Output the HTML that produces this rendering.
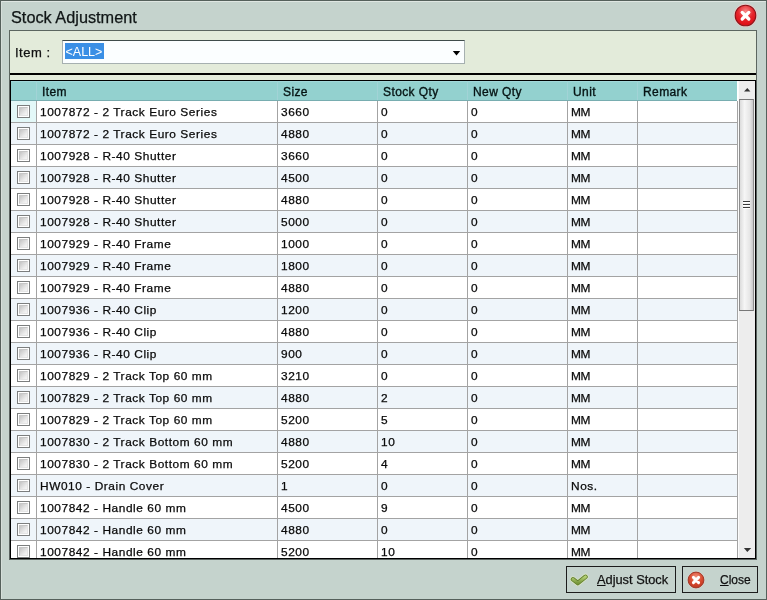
<!DOCTYPE html><html><head><meta charset="utf-8"><style>
*{margin:0;padding:0;box-sizing:border-box}
html,body{width:767px;height:600px;overflow:hidden}
body{background:#c5d3cd;position:relative;font-family:"Liberation Sans",sans-serif;color:#111}
.a{position:absolute}
.t{position:absolute;white-space:nowrap;line-height:14px;height:14px}
.bt{font-size:11px;letter-spacing:0.52px;transform:scaleX(1.08);transform-origin:0 0;color:#0a0a0a;-webkit-text-stroke:0.25px #0a0a0a}
.mm{letter-spacing:-0.4px}
.ht{font-size:12px;letter-spacing:0.4px;color:#061414;-webkit-text-stroke:0.35px #061414}

.cb{width:13px;height:13px;border:1px solid #7c7e7e;background:#fff}.cb:after{content:"";position:absolute;left:1px;top:1px;width:9px;height:9px;box-sizing:border-box;border:1px solid #c6c6c6;border-right-color:#e4e4e4;border-bottom-color:#e4e4e4;background:linear-gradient(135deg,#c4c4c4,#ececec 70%,#f6f6f6)}
</style></head><body>
<div class="a" style="left:0;top:0;width:767px;height:600px;background:#c5d3cd;will-change:transform">
<div class="a" style="left:0;top:0;width:767px;height:600px;border:1px solid #55605b"></div>
<div class="a" style="left:1px;top:1px;width:765px;height:598px;border-top:1px solid #dfe6e2;border-left:1px solid #d6dfda"></div>
<div class="t" style="left:11px;top:7px;font-size:16.3px;line-height:20px;height:20px;color:#101616;-webkit-text-stroke:0.25px #101616">Stock Adjustment</div>
<svg class="a" style="left:733px;top:3px" width="26" height="26" viewBox="0 0 26 26">
<defs><radialGradient id="rg1" cx="0.5" cy="0.3" r="0.75"><stop offset="0" stop-color="#f88888"/><stop offset="0.5" stop-color="#e5262c"/><stop offset="0.85" stop-color="#e01018"/><stop offset="1" stop-color="#b01015"/></radialGradient></defs>
<circle cx="12.5" cy="12.5" r="11.7" fill="#f2caca" opacity="0.75"/>
<circle cx="12.5" cy="12.5" r="10.3" fill="url(#rg1)" stroke="#8a1418" stroke-width="1.1"/>
<path d="M9.2 9.4 L15.8 16 M15.8 9.4 L9.2 16" stroke="#fff" stroke-width="3.3" stroke-linecap="round"/>
</svg>
<div class="a" style="left:9px;top:30px;width:748px;height:92px;background:#e3ebda;border:1px solid #5c6660;border-bottom:none"></div>
<div class="t" style="left:15px;top:46px;font-size:13px;letter-spacing:0.5px;color:#111;-webkit-text-stroke:0.25px #111">Item :</div>
<div class="a" style="left:62px;top:40px;width:403px;height:24px;background:#fbfeff;border:1px solid #a6b0b0;border-top-color:#3f4c4b"></div>
<div class="a" style="left:65px;top:43px;width:39px;height:16px;background:#3a8fe5"></div>
<div class="t" style="left:65.5px;top:45px;font-size:12.5px;color:#fff">&lt;ALL&gt;</div>
<svg class="a" style="left:452px;top:51px" width="10" height="7"><path d="M0.8 0 L8.2 0 L4.5 4.6 Z" fill="#000"/></svg>
<div class="a" style="left:10px;top:73px;width:746px;height:2px;background:#000"></div>
<div class="a" style="left:9px;top:80px;width:748px;height:480px;border:1px solid #5a6360;border-top:none"></div>
<div class="a" style="left:10px;top:80px;width:746px;height:479px;background:#fff;border:1px solid #000;overflow:hidden">
<div class="a" style="left:0;top:0;width:726px;height:19px;background:#93d1cf"></div>
<div class="a" style="left:0;top:0;width:726px;height:1px;background:#a2d8da"></div>
<div class="a" style="left:0;top:19px;width:726px;height:1px;background:#78adb0"></div>
<div class="t ht" style="left:31px;top:4px">Item</div>
<div class="t ht" style="left:272px;top:4px">Size</div>
<div class="t ht" style="left:372px;top:4px">Stock Qty</div>
<div class="t ht" style="left:462px;top:4px">New Qty</div>
<div class="t ht" style="left:562px;top:4px">Unit</div>
<div class="t ht" style="left:632px;top:4px">Remark</div>
<div class="a" style="left:25px;top:0;width:1px;height:19px;background:#a2d3d6"></div>
<div class="a" style="left:266px;top:0;width:1px;height:19px;background:#a2d3d6"></div>
<div class="a" style="left:366px;top:0;width:1px;height:19px;background:#a2d3d6"></div>
<div class="a" style="left:456px;top:0;width:1px;height:19px;background:#a2d3d6"></div>
<div class="a" style="left:556px;top:0;width:1px;height:19px;background:#a2d3d6"></div>
<div class="a" style="left:626px;top:0;width:1px;height:19px;background:#a2d3d6"></div>
<div class="a" style="left:0;top:20px;width:726px;height:21px;background:#ffffff"></div>
<div class="a" style="left:0;top:20px;width:25px;height:21px;background:#e3f8f8"></div>
<div class="a" style="left:0;top:41px;width:726px;height:1px;background:#a3a3a3"></div>
<div class="a cb" style="left:6px;top:24px"></div>
<div class="t bt" style="left:29px;top:24px">1007872 - 2 Track Euro Series</div>
<div class="t bt" style="left:270px;top:24px">3660</div>
<div class="t bt" style="left:370px;top:24px">0</div>
<div class="t bt" style="left:460px;top:24px">0</div>
<div class="t bt" style="left:560px;top:24px"><span class="mm">MM</span></div>
<div class="a" style="left:0;top:42px;width:726px;height:21px;background:#eff5fa"></div>
<div class="a" style="left:0;top:63px;width:726px;height:1px;background:#a3a3a3"></div>
<div class="a cb" style="left:6px;top:46px"></div>
<div class="t bt" style="left:29px;top:46px">1007872 - 2 Track Euro Series</div>
<div class="t bt" style="left:270px;top:46px">4880</div>
<div class="t bt" style="left:370px;top:46px">0</div>
<div class="t bt" style="left:460px;top:46px">0</div>
<div class="t bt" style="left:560px;top:46px"><span class="mm">MM</span></div>
<div class="a" style="left:0;top:64px;width:726px;height:21px;background:#ffffff"></div>
<div class="a" style="left:0;top:85px;width:726px;height:1px;background:#a3a3a3"></div>
<div class="a cb" style="left:6px;top:68px"></div>
<div class="t bt" style="left:29px;top:68px">1007928 - R-40 Shutter</div>
<div class="t bt" style="left:270px;top:68px">3660</div>
<div class="t bt" style="left:370px;top:68px">0</div>
<div class="t bt" style="left:460px;top:68px">0</div>
<div class="t bt" style="left:560px;top:68px"><span class="mm">MM</span></div>
<div class="a" style="left:0;top:86px;width:726px;height:21px;background:#eff5fa"></div>
<div class="a" style="left:0;top:107px;width:726px;height:1px;background:#a3a3a3"></div>
<div class="a cb" style="left:6px;top:90px"></div>
<div class="t bt" style="left:29px;top:90px">1007928 - R-40 Shutter</div>
<div class="t bt" style="left:270px;top:90px">4500</div>
<div class="t bt" style="left:370px;top:90px">0</div>
<div class="t bt" style="left:460px;top:90px">0</div>
<div class="t bt" style="left:560px;top:90px"><span class="mm">MM</span></div>
<div class="a" style="left:0;top:108px;width:726px;height:21px;background:#ffffff"></div>
<div class="a" style="left:0;top:129px;width:726px;height:1px;background:#a3a3a3"></div>
<div class="a cb" style="left:6px;top:112px"></div>
<div class="t bt" style="left:29px;top:112px">1007928 - R-40 Shutter</div>
<div class="t bt" style="left:270px;top:112px">4880</div>
<div class="t bt" style="left:370px;top:112px">0</div>
<div class="t bt" style="left:460px;top:112px">0</div>
<div class="t bt" style="left:560px;top:112px"><span class="mm">MM</span></div>
<div class="a" style="left:0;top:130px;width:726px;height:21px;background:#eff5fa"></div>
<div class="a" style="left:0;top:151px;width:726px;height:1px;background:#a3a3a3"></div>
<div class="a cb" style="left:6px;top:134px"></div>
<div class="t bt" style="left:29px;top:134px">1007928 - R-40 Shutter</div>
<div class="t bt" style="left:270px;top:134px">5000</div>
<div class="t bt" style="left:370px;top:134px">0</div>
<div class="t bt" style="left:460px;top:134px">0</div>
<div class="t bt" style="left:560px;top:134px"><span class="mm">MM</span></div>
<div class="a" style="left:0;top:152px;width:726px;height:21px;background:#ffffff"></div>
<div class="a" style="left:0;top:173px;width:726px;height:1px;background:#a3a3a3"></div>
<div class="a cb" style="left:6px;top:156px"></div>
<div class="t bt" style="left:29px;top:156px">1007929 - R-40 Frame</div>
<div class="t bt" style="left:270px;top:156px">1000</div>
<div class="t bt" style="left:370px;top:156px">0</div>
<div class="t bt" style="left:460px;top:156px">0</div>
<div class="t bt" style="left:560px;top:156px"><span class="mm">MM</span></div>
<div class="a" style="left:0;top:174px;width:726px;height:21px;background:#eff5fa"></div>
<div class="a" style="left:0;top:195px;width:726px;height:1px;background:#a3a3a3"></div>
<div class="a cb" style="left:6px;top:178px"></div>
<div class="t bt" style="left:29px;top:178px">1007929 - R-40 Frame</div>
<div class="t bt" style="left:270px;top:178px">1800</div>
<div class="t bt" style="left:370px;top:178px">0</div>
<div class="t bt" style="left:460px;top:178px">0</div>
<div class="t bt" style="left:560px;top:178px"><span class="mm">MM</span></div>
<div class="a" style="left:0;top:196px;width:726px;height:21px;background:#ffffff"></div>
<div class="a" style="left:0;top:217px;width:726px;height:1px;background:#a3a3a3"></div>
<div class="a cb" style="left:6px;top:200px"></div>
<div class="t bt" style="left:29px;top:200px">1007929 - R-40 Frame</div>
<div class="t bt" style="left:270px;top:200px">4880</div>
<div class="t bt" style="left:370px;top:200px">0</div>
<div class="t bt" style="left:460px;top:200px">0</div>
<div class="t bt" style="left:560px;top:200px"><span class="mm">MM</span></div>
<div class="a" style="left:0;top:218px;width:726px;height:21px;background:#eff5fa"></div>
<div class="a" style="left:0;top:239px;width:726px;height:1px;background:#a3a3a3"></div>
<div class="a cb" style="left:6px;top:222px"></div>
<div class="t bt" style="left:29px;top:222px">1007936 - R-40 Clip</div>
<div class="t bt" style="left:270px;top:222px">1200</div>
<div class="t bt" style="left:370px;top:222px">0</div>
<div class="t bt" style="left:460px;top:222px">0</div>
<div class="t bt" style="left:560px;top:222px"><span class="mm">MM</span></div>
<div class="a" style="left:0;top:240px;width:726px;height:21px;background:#ffffff"></div>
<div class="a" style="left:0;top:261px;width:726px;height:1px;background:#a3a3a3"></div>
<div class="a cb" style="left:6px;top:244px"></div>
<div class="t bt" style="left:29px;top:244px">1007936 - R-40 Clip</div>
<div class="t bt" style="left:270px;top:244px">4880</div>
<div class="t bt" style="left:370px;top:244px">0</div>
<div class="t bt" style="left:460px;top:244px">0</div>
<div class="t bt" style="left:560px;top:244px"><span class="mm">MM</span></div>
<div class="a" style="left:0;top:262px;width:726px;height:21px;background:#eff5fa"></div>
<div class="a" style="left:0;top:283px;width:726px;height:1px;background:#a3a3a3"></div>
<div class="a cb" style="left:6px;top:266px"></div>
<div class="t bt" style="left:29px;top:266px">1007936 - R-40 Clip</div>
<div class="t bt" style="left:270px;top:266px">900</div>
<div class="t bt" style="left:370px;top:266px">0</div>
<div class="t bt" style="left:460px;top:266px">0</div>
<div class="t bt" style="left:560px;top:266px"><span class="mm">MM</span></div>
<div class="a" style="left:0;top:284px;width:726px;height:21px;background:#ffffff"></div>
<div class="a" style="left:0;top:305px;width:726px;height:1px;background:#a3a3a3"></div>
<div class="a cb" style="left:6px;top:288px"></div>
<div class="t bt" style="left:29px;top:288px">1007829 - 2 Track Top 60 mm</div>
<div class="t bt" style="left:270px;top:288px">3210</div>
<div class="t bt" style="left:370px;top:288px">0</div>
<div class="t bt" style="left:460px;top:288px">0</div>
<div class="t bt" style="left:560px;top:288px"><span class="mm">MM</span></div>
<div class="a" style="left:0;top:306px;width:726px;height:21px;background:#eff5fa"></div>
<div class="a" style="left:0;top:327px;width:726px;height:1px;background:#a3a3a3"></div>
<div class="a cb" style="left:6px;top:310px"></div>
<div class="t bt" style="left:29px;top:310px">1007829 - 2 Track Top 60 mm</div>
<div class="t bt" style="left:270px;top:310px">4880</div>
<div class="t bt" style="left:370px;top:310px">2</div>
<div class="t bt" style="left:460px;top:310px">0</div>
<div class="t bt" style="left:560px;top:310px"><span class="mm">MM</span></div>
<div class="a" style="left:0;top:328px;width:726px;height:21px;background:#ffffff"></div>
<div class="a" style="left:0;top:349px;width:726px;height:1px;background:#a3a3a3"></div>
<div class="a cb" style="left:6px;top:332px"></div>
<div class="t bt" style="left:29px;top:332px">1007829 - 2 Track Top 60 mm</div>
<div class="t bt" style="left:270px;top:332px">5200</div>
<div class="t bt" style="left:370px;top:332px">5</div>
<div class="t bt" style="left:460px;top:332px">0</div>
<div class="t bt" style="left:560px;top:332px"><span class="mm">MM</span></div>
<div class="a" style="left:0;top:350px;width:726px;height:21px;background:#eff5fa"></div>
<div class="a" style="left:0;top:371px;width:726px;height:1px;background:#a3a3a3"></div>
<div class="a cb" style="left:6px;top:354px"></div>
<div class="t bt" style="left:29px;top:354px">1007830 - 2 Track Bottom 60 mm</div>
<div class="t bt" style="left:270px;top:354px">4880</div>
<div class="t bt" style="left:370px;top:354px">10</div>
<div class="t bt" style="left:460px;top:354px">0</div>
<div class="t bt" style="left:560px;top:354px"><span class="mm">MM</span></div>
<div class="a" style="left:0;top:372px;width:726px;height:21px;background:#ffffff"></div>
<div class="a" style="left:0;top:393px;width:726px;height:1px;background:#a3a3a3"></div>
<div class="a cb" style="left:6px;top:376px"></div>
<div class="t bt" style="left:29px;top:376px">1007830 - 2 Track Bottom 60 mm</div>
<div class="t bt" style="left:270px;top:376px">5200</div>
<div class="t bt" style="left:370px;top:376px">4</div>
<div class="t bt" style="left:460px;top:376px">0</div>
<div class="t bt" style="left:560px;top:376px"><span class="mm">MM</span></div>
<div class="a" style="left:0;top:394px;width:726px;height:21px;background:#eff5fa"></div>
<div class="a" style="left:0;top:415px;width:726px;height:1px;background:#a3a3a3"></div>
<div class="a cb" style="left:6px;top:398px"></div>
<div class="t bt" style="left:29px;top:398px">HW010 - Drain Cover</div>
<div class="t bt" style="left:270px;top:398px">1</div>
<div class="t bt" style="left:370px;top:398px">0</div>
<div class="t bt" style="left:460px;top:398px">0</div>
<div class="t bt" style="left:560px;top:398px">Nos.</div>
<div class="a" style="left:0;top:416px;width:726px;height:21px;background:#ffffff"></div>
<div class="a" style="left:0;top:437px;width:726px;height:1px;background:#a3a3a3"></div>
<div class="a cb" style="left:6px;top:420px"></div>
<div class="t bt" style="left:29px;top:420px">1007842 - Handle 60 mm</div>
<div class="t bt" style="left:270px;top:420px">4500</div>
<div class="t bt" style="left:370px;top:420px">9</div>
<div class="t bt" style="left:460px;top:420px">0</div>
<div class="t bt" style="left:560px;top:420px"><span class="mm">MM</span></div>
<div class="a" style="left:0;top:438px;width:726px;height:21px;background:#eff5fa"></div>
<div class="a" style="left:0;top:459px;width:726px;height:1px;background:#a3a3a3"></div>
<div class="a cb" style="left:6px;top:442px"></div>
<div class="t bt" style="left:29px;top:442px">1007842 - Handle 60 mm</div>
<div class="t bt" style="left:270px;top:442px">4880</div>
<div class="t bt" style="left:370px;top:442px">0</div>
<div class="t bt" style="left:460px;top:442px">0</div>
<div class="t bt" style="left:560px;top:442px"><span class="mm">MM</span></div>
<div class="a" style="left:0;top:460px;width:726px;height:21px;background:#ffffff"></div>
<div class="a" style="left:0;top:481px;width:726px;height:1px;background:#a3a3a3"></div>
<div class="a cb" style="left:6px;top:464px"></div>
<div class="t bt" style="left:29px;top:464px">1007842 - Handle 60 mm</div>
<div class="t bt" style="left:270px;top:464px">5200</div>
<div class="t bt" style="left:370px;top:464px">10</div>
<div class="t bt" style="left:460px;top:464px">0</div>
<div class="t bt" style="left:560px;top:464px"><span class="mm">MM</span></div>
<div class="a" style="left:25px;top:20px;width:1px;height:460px;background:#a3a3a3"></div>
<div class="a" style="left:266px;top:20px;width:1px;height:460px;background:#a3a3a3"></div>
<div class="a" style="left:366px;top:20px;width:1px;height:460px;background:#a3a3a3"></div>
<div class="a" style="left:456px;top:20px;width:1px;height:460px;background:#a3a3a3"></div>
<div class="a" style="left:556px;top:20px;width:1px;height:460px;background:#a3a3a3"></div>
<div class="a" style="left:626px;top:20px;width:1px;height:460px;background:#a3a3a3"></div>
<div class="a" style="left:726px;top:20px;width:1px;height:460px;background:#a3a3a3"></div>
<div class="a" style="left:727px;top:0;width:17px;height:477px;background:#ededed;border-left:1px solid #fbfbfb"></div>
<svg class="a" style="left:732px;top:6px" width="9" height="6"><path d="M1 4.6 L4.3 0.9 L7.4 4.6 Z" fill="#333"/></svg>
<svg class="a" style="left:732px;top:466px" width="9" height="6"><path d="M0.9 1 L8.2 1 L4.3 4.9 Z" fill="#333"/></svg>
<div class="a" style="left:728px;top:18px;width:15px;height:212px;border:1px solid #8e8e8e;border-top-color:#777;border-bottom-color:#777;background:linear-gradient(to right,#dcdcdc,#f6f6f6 35%,#e6e6e6 75%,#c9c9cb)"></div>
<div class="a" style="left:732px;top:120px;width:7px;height:1px;background:#3a3a3a;box-shadow:0 1px 0 #fff"></div>
<div class="a" style="left:732px;top:123px;width:7px;height:1px;background:#3a3a3a;box-shadow:0 1px 0 #fff"></div>
<div class="a" style="left:732px;top:126px;width:7px;height:1px;background:#3a3a3a;box-shadow:0 1px 0 #fff"></div>
</div>
<div class="a" style="left:566px;top:566px;width:110px;height:27px;border:1px solid #1c1c1c"></div>
<svg class="a" style="left:570px;top:572px" width="20" height="16" viewBox="0 0 20 16">
<defs><linearGradient id="gc" x1="0" y1="0" x2="0" y2="1"><stop offset="0" stop-color="#b4d074"/><stop offset="1" stop-color="#76963a"/></linearGradient></defs>
<path d="M3 7.3 L7.8 11.1 L15.5 4.8" stroke="#e2ecc4" stroke-width="6" fill="none" stroke-linecap="round" stroke-linejoin="round" opacity="0.75"/>
<path d="M3 7.3 L7.8 11.1 L15.5 4.8" stroke="#5f7c2e" stroke-width="4.5" fill="none" stroke-linecap="round" stroke-linejoin="round"/>
<path d="M3 7.3 L7.8 11.1 L15.5 4.8" stroke="url(#gc)" stroke-width="2.9" fill="none" stroke-linecap="round" stroke-linejoin="round"/>
</svg>
<div class="t" style="left:597px;top:573px;font-size:12.8px;color:#111;-webkit-text-stroke:0.25px #111"><u>A</u>djust Stock</div>
<div class="a" style="left:682px;top:566px;width:76px;height:27px;border:1px solid #1c1c1c"></div>
<svg class="a" style="left:686px;top:570px" width="20" height="20" viewBox="0 0 20 20">
<defs><radialGradient id="rg2" cx="0.5" cy="0.3" r="0.75"><stop offset="0" stop-color="#f0907a"/><stop offset="0.55" stop-color="#d8482e"/><stop offset="1" stop-color="#b8351f"/></radialGradient></defs>
<circle cx="10" cy="10" r="8.8" fill="#f0d8d0" opacity="0.55"/>
<circle cx="10" cy="10" r="7.9" fill="url(#rg2)" stroke="#983020" stroke-width="0.9"/>
<path d="M7.4 7.4 L12.6 12.6 M12.6 7.4 L7.4 12.6" stroke="#fff" stroke-width="2.9" stroke-linecap="round"/>
</svg>
<div class="t" style="left:720px;top:573px;font-size:12px;color:#111;-webkit-text-stroke:0.25px #111"><u>C</u>lose</div>
</div>
</body></html>
